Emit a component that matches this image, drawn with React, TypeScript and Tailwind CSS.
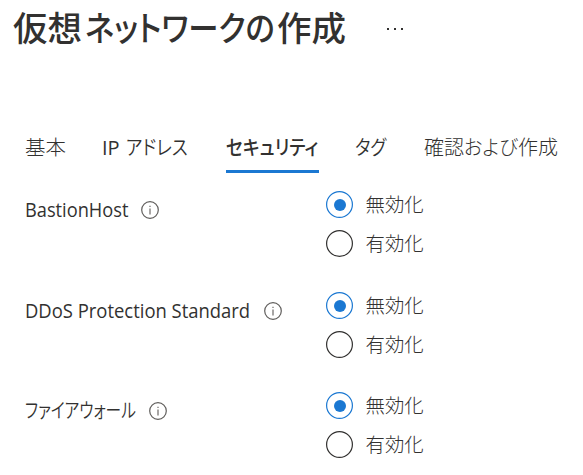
import type { ReactNode } from "react";

type RunProps = { width: string; scale: string; children: ReactNode };

// A run of kana, condensed to the given advance width.
function Run({ width, scale, children }: RunProps) {
  return (
    <span className={`inline-block ${width}`}>
      <span className={`inline-block origin-left whitespace-nowrap [font-feature-settings:'palt'] ${scale}`}>{children}</span>
    </span>
  );
}

function Info() {
  return (
    <svg className="size-[18px] shrink-0" viewBox="0 0 18 18" fill="none">
      <circle cx="9" cy="9" r="8.3" stroke="#605e5c" strokeWidth="1.2" />
      <path d="M9 7.5V13.5M9 4.7V6" stroke="#8a8886" strokeWidth="1.5" />
    </svg>
  );
}

function Radio({ label, checked = false }: { label: string; checked?: boolean }) {
  return (
    <div className="flex h-[27px] items-center gap-3">
      <svg className="size-[27px] shrink-0" viewBox="0 0 27 27" fill="none">
        <circle cx="13.5" cy="13.5" r="12.9" stroke={checked ? "#1b78d2" : "#323130"} strokeWidth="1.2" />
        {checked && <circle cx="14" cy="14" r="6" fill="#1b78d2" />}
      </svg>
      <span className="pl-[0.5px] text-[19.4px] leading-[26px]">{label}</span>
    </div>
  );
}

function Row({ label, width }: { label: ReactNode; width: string }) {
  return (
    <div className="flex h-[66px]">
      <div className="mt-[5px] flex h-[27px] w-[301px] items-center">
        <span className={`whitespace-nowrap leading-[27px] ${width}`}>{label}</span>
        <Info />
      </div>
      <div className="flex flex-col gap-3">
        <Radio label="無効化" checked />
        <Radio label="有効化" />
      </div>
    </div>
  );
}

export default function App() {
  return (
    <main className="h-[475px] w-[583px] overflow-hidden bg-white font-['Open_Sans','Noto_Sans_CJK_JP',sans-serif] text-[20px] font-light text-[#323130]">
      <header className="flex h-[56px] items-center pl-[13px]">
        <h1 className="flex h-[56px] font-['Noto_Sans_CJK_JP',sans-serif] text-[34.5px] leading-[53px] font-medium">
          <span className="w-[72px]">仮想</span>
          <Run width="w-[192px]" scale="scale-x-[0.88]">ネットワークの</Run>
          <span className="w-[69px]">作成</span>
        </h1>
        <div className="ml-[41px] flex gap-[5px] pt-[2px]">
          <i className="size-[2px] bg-[#323130]" />
          <i className="size-[2px] bg-[#323130]" />
          <i className="size-[2px] bg-[#323130]" />
        </div>
      </header>
      <nav className="mt-[76px] flex h-[41px] pl-[25px] leading-[31px] whitespace-nowrap">
        <span className="w-[77px] text-[20.5px]">基本</span>
        <span className="flex w-[124px] font-[350]">
          <span className="w-[24px] font-normal">IP</span>
          <Run width="w-[64px]" scale="scale-x-[0.88]">アドレス</Run>
        </span>
        <span className="w-[93px] border-b-[3px] border-[#1b78d2] font-medium">
          <Run width="w-[93px]" scale="scale-x-[0.89]">セキュリティ</Run>
        </span>
        <span className="ml-[36px] w-[69px] font-[350]">
          <Run width="w-[34px]" scale="scale-x-[0.88]">タグ</Run>
        </span>
        <span className="flex">
          <span>確認</span>
          <Run width="w-[54px]" scale="scale-x-[0.96]">および</Run>
          <span>作成</span>
        </span>
      </nav>
      <section className="flex flex-col gap-[34px] pt-[18px] pl-[25px]">
        <Row
          label={<span className="inline-block origin-left scale-x-[0.935] text-[19.5px] font-[370]">BastionHost</span>}
          width="w-[116px]"
        />
        <div className="mt-px">
          <Row
            label={<span className="inline-block origin-left scale-x-[0.945] text-[19.5px] font-[370]">DDoS Protection Standard</span>}
            width="w-[239px]"
          />
        </div>
        <Row
          label={<span className="font-[350]"><Run width="w-[112px]" scale="scale-x-[0.785]">ファイアウォール</Run></span>}
          width="w-[124px]"
        />
      </section>
    </main>
  );
}
